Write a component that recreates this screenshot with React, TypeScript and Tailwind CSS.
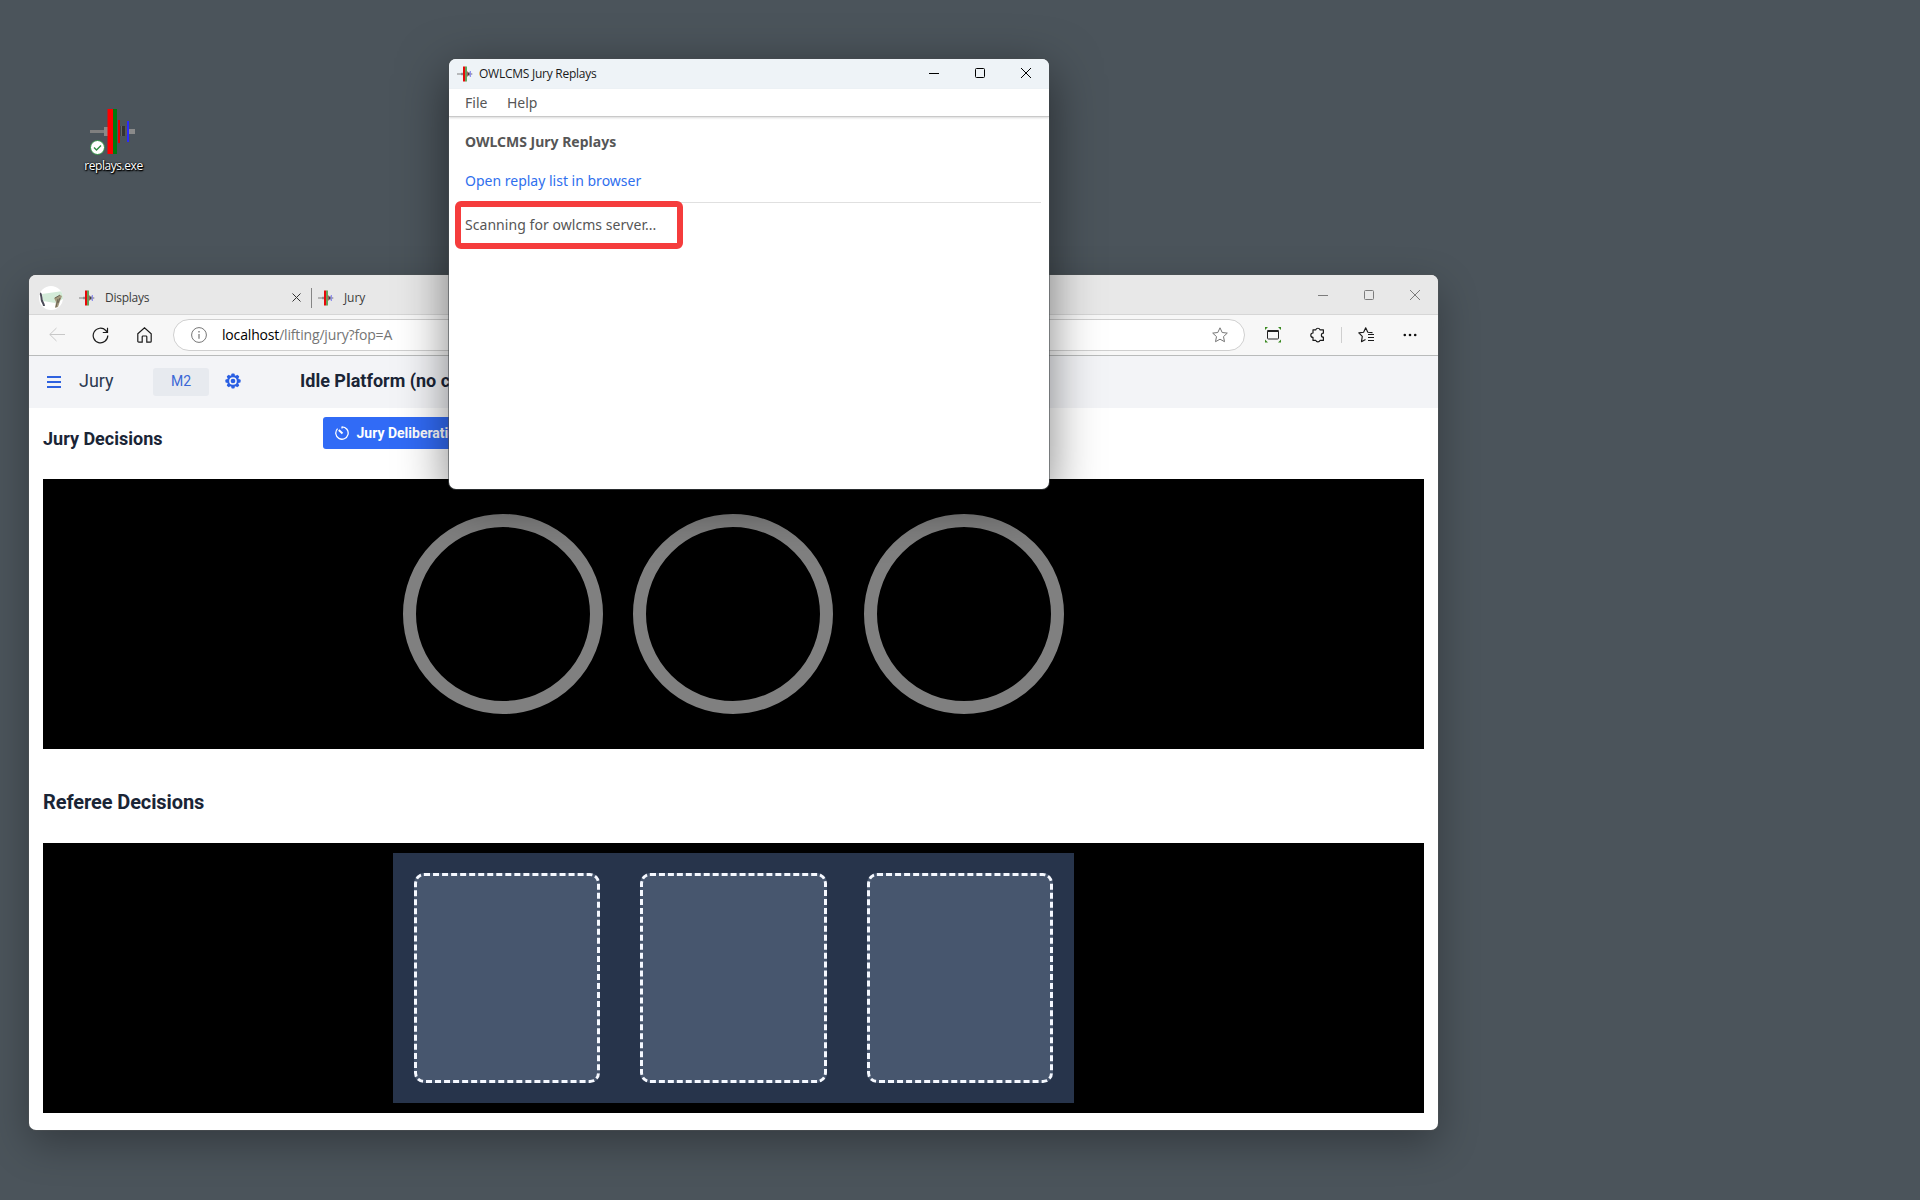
import React from "react";

const UI = "font-['Open_Sans','Noto_Sans',sans-serif]";

function Barbell({ className }: { className?: string }) {
  return (
    <svg viewBox="0 0 16 16" className={className}>
      <rect x="0" y="7.500" width="5" height="1" fill="#808080" />
      <rect x="4" y="6.800" width="2" height="2.400" fill="#909090" />
      <rect x="6" y="0.500" width="2.300" height="15" fill="#e80808" />
      <rect x="8.300" y="0.500" width="1.500" height="15" fill="#3a9a3a" />
      <rect x="9.800" y="5.500" width="1" height="5" fill="#b04040" />
      <rect x="10.800" y="6.500" width="1.800" height="3" fill="#404048" />
      <rect x="12.800" y="5" width="1" height="6" fill="#7a7aee" />
      <rect x="13.800" y="7.400" width="1.500" height="1.200" fill="#808090" />
    </svg>
  );
}

function DesktopIcon() {
  return (
    <div className="absolute left-[83px] top-[104px] flex w-[61px] flex-col items-center">
      <svg viewBox="0 0 62 54" className="h-[54px] w-[62px] shrink-0 self-start">
        <rect x="7" y="26" width="15" height="3" fill="#7f7f7f" />
        <rect x="21" y="23" width="4" height="9" fill="#8a8a8a" />
        <rect x="24.500" y="5" width="6" height="45" fill="#fe0000" />
        <rect x="30" y="5" width="4" height="45" fill="#007a10" />
        <rect x="35" y="16" width="2" height="23" fill="#e40000" />
        <rect x="37.500" y="22" width="4.500" height="10" fill="#333" />
        <rect x="38" y="22" width="1" height="10" fill="#666" />
        <rect x="42" y="23" width="2" height="8" fill="#555" />
        <rect x="44" y="17" width="2" height="21" fill="#2a2aff" />
        <rect x="46" y="25" width="6" height="5" fill="#8a8a8a" />
        <circle cx="14.500" cy="43.500" r="7" fill="#fff" stroke="#2f8f43" strokeWidth="1" />
        <path d="M11 43.500l2.500 2.500 4.500-4.500" fill="none" stroke="#2f8f43" strokeWidth="1.400" />
      </svg>
      <span className={`${UI} text-[12px] leading-4 tracking-[-0.45px] text-white [text-shadow:0_1px_2px_#000,0_0_2px_#000,1px_1px_1px_#000]`}>replays.exe</span>
    </div>
  );
}

function Controls({ color }: { color: string }) {
  return (
    <div className="flex items-center">
      <svg className="mr-[36px] size-[10px]" viewBox="0 0 10 10"><path d="M0 5.500h10" stroke={color} /></svg>
      <svg className="mr-9 size-[10px]" viewBox="0 0 10 10"><rect x=".5" y=".5" width="9" height="9" rx="1" fill="none" stroke={color} /></svg>
      <svg className="size-[10px]" viewBox="0 0 10 10"><path d="M0 0l10 10M10 0L0 10" fill="none" stroke={color} /></svg>
    </div>
  );
}

function Avatar() {
  return (
    <svg viewBox="0 0 24 24" className="size-6">
      <defs><clipPath id="av"><circle cx="12" cy="12" r="12" /></clipPath></defs>
      <g clipPath="url(#av)">
        <rect width="24" height="24" fill="#fff" />
        <path d="M3 8L24 5v8l-8 4L4 15z" fill="#d3ebd9" />
        <path d="M1 7c2 2 1 5 2 8 1 2 2 3 2 5" fill="none" stroke="#4b4b58" strokeWidth="2" />
        <path d="M15 12l6-3 2 1-2 5-2 6-3 1 1-6z" fill="#a39a7e" />
        <path d="M16 12l5-3M19 13l-2 8M21 12l-2 5" fill="none" stroke="#5c5649" strokeWidth=".8" />
      </g>
    </svg>
  );
}

function TabBar() {
  return (
    <div className="flex h-[40px] shrink-0 items-center border-b border-[#d6d6d6] bg-[#e8e8e8] pt-[6px]">
      <div className="ml-[10px] mt-px size-6"><Avatar /></div>
      <Barbell className="ml-4 size-4" />
      <span className="ml-[10px] w-[180px] pt-px text-[12px] tracking-[-0.25px] text-[#3c3c3c]">Displays</span>
      <svg className="ml-[7px] size-[9px]" viewBox="0 0 9 9"><path d="M.5.500l8 8M8.500.500l-8 8" stroke="#333" fill="none" /></svg>
      <div className="ml-[10px] h-5 w-px bg-[#858585]" />
      <Barbell className="ml-[6px] size-4" />
      <span className="ml-[10px] pt-px text-[12px] tracking-[-0.1px] text-[#3c3c3c]">Jury</span>
      <div className="-mt-[6px] ml-auto mr-[18px]"><Controls color="#7c7c7c" /></div>
    </div>
  );
}

function Toolbar() {
  return (
    <div className="flex h-[41px] shrink-0 items-center border-b border-[#b9bbbb] bg-[#f7f7f7]">
      <svg className="ml-5 h-4 w-4" viewBox="0 0 16 16" fill="none" stroke="#c8c8c8"><path d="M16 7.500H.8M7.500 1L.8 7.500 7.500 14" /></svg>
      <svg className="ml-[27px] h-[17px] w-[17px]" viewBox="0 0 17 17" fill="none" stroke="#1b1b1b" strokeWidth="1.200"><path d="M15.800 8.500A7.300 7.300 0 1 1 13.800 3.500L15.200 5.200M15.500.8v4.700H10.800" /></svg>
      <svg className="ml-[28px] h-[16px] w-[15px]" viewBox="0 0 15 16" fill="none" stroke="#1b1b1b" strokeWidth="1.200"><path d="M.8 6.800L7.500.8l6.700 6v7.400a1 1 0 0 1-1 1H9.800v-5.400a.8.8 0 0 0-.8-.8H6a.8.8 0 0 0-.8.8v5.400H1.800a1 1 0 0 1-1-1z" /></svg>
      <div className="ml-[21px] flex h-8 w-[1072px] items-center rounded-full border border-[#cfcfcf] bg-white">
        <svg className="ml-[17px] size-4" viewBox="0 0 16 16" fill="none" stroke="#767676"><circle cx="8" cy="8" r="7.400" /><path d="M8 7v4.800" strokeWidth="1.200" /><path d="M8 4v1.400" strokeWidth="1.300" /></svg>
        <span className="ml-[15px] pb-px text-[14px] tracking-[-0.17px] text-[#757575]"><span className="text-black">localhost</span>/lifting/jury?fop=A</span>
        <svg className="ml-auto mr-4 size-4" viewBox="0 0 16 16" fill="none" stroke="#767676" strokeLinejoin="round"><path d="M8 .8l2.200 4.700 5.100.6-3.800 3.500 1 5.100L8 12.200l-4.500 2.500 1-5.100L.7 6.100l5.100-.6z" /></svg>
      </div>
      <svg className="ml-5 size-4" viewBox="0 0 16 16" fill="none"><path d="M0 3L0 0H3L0 3ZM13 0h3v3L13 0ZM16 12.500v3h-3L16 12.500ZM3 15.500H0v-3L3 15.500Z" fill="#3a8a20" /><rect x="2.500" y="3.500" width="11" height="8.500" rx=".8" stroke="#222" /><path d="M2.500 4h11" stroke="#222" strokeWidth="1.800" /></svg>
      <svg className="ml-[29px] size-4" viewBox="0 0 16 16" fill="none" stroke="#1b1b1b" strokeWidth="1.200" strokeLinejoin="round"><path d="M3 2.800h2.800a2.200 2.200 0 0 1 4.200 0H13.400v3.400a2 2 0 0 0 0 4v3.200H10a2.200 2.200 0 0 1-4.200 0H3v-3a2.200 2.200 0 0 1 0-4.400z" /></svg>
      <div className="ml-[15px] h-4 w-px bg-[#cfcfcf]" />
      <svg className="ml-4 size-4" viewBox="0 0 16 16" fill="none" stroke="#1b1b1b" strokeWidth="1.150" strokeLinejoin="round"><path d="M14.500 5.600L9.800 5.200 7.700.8 5.600 5.200.8 5.900l3.500 3.500-.8 5.300 4-2.200M10 7.500h6M10 10.500h6M10 13.500h6" /></svg>
      <svg className="ml-[29px] h-[4px] w-[14px]" viewBox="0 0 14 4" fill="#111"><circle cx="1.800" cy="2" r="1.300" /><circle cx="7" cy="2" r="1.300" /><circle cx="12.200" cy="2" r="1.300" /></svg>
    </div>
  );
}

function AppHeader() {
  return (
    <div className="flex h-[52px] shrink-0 items-center bg-[#f3f4f7] pb-[3px] font-[Roboto,sans-serif]">
      <svg className="ml-[18px] mt-[2px] h-[12px] w-[14px]" viewBox="0 0 14 12"><path d="M0 1h14M0 6h14M0 11h14" stroke="#2f62df" strokeWidth="1.900" /></svg>
      <span className="ml-[18px] w-[74px] text-[18px] text-[#2b3950]">Jury</span>
      <div className="mt-[3px] flex h-7 w-14 items-center justify-center rounded-[3px] bg-[#e7eaef] pb-px text-[14px] text-[#3a67d6]">M2</div>
      <svg className="ml-[15.500px] mt-px size-4" viewBox="0 0 16 16">
        <g fill="#2a5fe3">
          <rect x="6.300" y=".4" width="3.400" height="15.200" rx="1" />
          <rect x="6.300" y=".4" width="3.400" height="15.200" rx="1" transform="rotate(45 8 8)" />
          <rect x="6.300" y=".4" width="3.400" height="15.200" rx="1" transform="rotate(90 8 8)" />
          <rect x="6.300" y=".4" width="3.400" height="15.200" rx="1" transform="rotate(135 8 8)" />
          <circle cx="8" cy="8" r="6" />
        </g>
        <circle cx="8" cy="8" r="3.100" fill="none" stroke="#f3f4f7" strokeWidth="1.500" />
      </svg>
      <span className="ml-[59.500px] whitespace-nowrap text-[18px] font-bold text-[#1a2536]">Idle Platform (no c</span>
    </div>
  );
}

function BrowserWindow() {
  return (
    <div className={`${UI} absolute left-[29px] top-[275px] flex h-[855px] w-[1409px] flex-col overflow-hidden rounded-[7px] bg-white`}>
      <TabBar />
      <Toolbar />
      <AppHeader />
      <div className="flex flex-col px-[14px] font-[Roboto,sans-serif]">
        <div className="flex h-[71px] items-start">
          <h2 className="w-[280px] pt-[17px] text-[18px] font-bold leading-7 text-[#1a2536]">Jury Decisions</h2>
          <button className="mt-[9px] flex h-8 w-[180px] items-center rounded-[3px] bg-[#316bf6] text-left text-[14px] font-bold text-white">
            <svg className="ml-3 size-[14px]" viewBox="0 0 14 14" fill="none" stroke="#fff" strokeWidth="1.300"><path d="M7 .4V2.400M7 .8A6.200 6.200 0 1 1 2.600 2.600" /><path d="M3.800 4L7.500 7.500" strokeWidth="2" /></svg>
            <span className="ml-[7.500px] whitespace-nowrap">Jury Deliberation</span>
          </button>
        </div>
        <div className="flex h-[270px] w-[1381px] items-center justify-center bg-black">
          <div className="mr-[30px] size-[200px] rounded-full border-[13px] border-[#808080]" />
          <div className="mr-[31px] size-[200px] rounded-full border-[13px] border-[#808080]" />
          <div className="size-[200px] rounded-full border-[13px] border-[#808080]" />
        </div>
        <h2 className="flex h-[94px] items-center pt-[12px] text-[20px] font-bold tracking-[-0.1px] text-[#1a2536]">Referee Decisions</h2>
        <div className="flex h-[270px] w-[1381px] items-center justify-center bg-black">
          <div className="flex h-[250px] w-[681px] items-center justify-between bg-[#27344b] px-[21px]">
            <div className="h-[210px] w-[186px] rounded-[10px] border-[3px] border-dashed border-[#f5f8ff] bg-[#47566e]" />
            <div className="h-[210px] w-[187px] rounded-[10px] border-[3px] border-dashed border-[#f5f8ff] bg-[#47566e]" />
            <div className="h-[210px] w-[186px] rounded-[10px] border-[3px] border-dashed border-[#f5f8ff] bg-[#47566e]" />
          </div>
        </div>
      </div>
    </div>
  );
}

function ReplayWindow() {
  return (
    <div className="absolute left-[449px] top-[59px] flex h-[430px] w-[600px] flex-col rounded-[7px] bg-white font-['Noto_Sans',sans-serif] text-[14px] text-[#565656] shadow-[0_0_0_1px_rgba(70,75,78,0.6),0_14px_50px_rgba(0,0,0,0.5)]">
      <div className={`${UI} flex h-[30px] shrink-0 items-center rounded-t-[7px] bg-[#eef3f7]`}>
        <Barbell className="ml-2 size-4" />
        <span className="ml-[6px] text-[12px] tracking-[-0.25px] text-[#1a1a1a]">OWLCMS Jury Replays</span>
        <div className="-mt-[2px] ml-auto mr-[18px]"><Controls color="#000" /></div>
      </div>
      <div className="flex h-[28px] shrink-0 items-center gap-[19.500px] border-b border-[#c9c9c9] pl-4 shadow-[0_1px_2px_rgba(0,0,0,0.15)]">
        <span>File</span>
        <span>Help</span>
      </div>
      <div className="ml-4 mr-2 flex flex-col">
        <h1 className="mt-[14px] h-[22px] font-bold leading-[22px]">OWLCMS Jury Replays</h1>
        <a className="mt-[17px] h-[22px] leading-[22px] text-[#2f6fee]">Open replay list in browser</a>
        <div className="-ml-2 mt-[10px] h-px bg-[#e0e0e0]" />
        <div className="-ml-[10px] -mt-[2px] flex h-12 w-[228px] items-center rounded-[6px] border-[6px] border-[#f53c3c] bg-white pb-[2px] pl-1 tracking-[0.05px]">Scanning for owlcms server...</div>
      </div>
    </div>
  );
}

export default function App() {
  return (
    <div className="relative h-[1200px] w-[1920px] overflow-hidden bg-[#4b545b]">
      <DesktopIcon />
      <div className="absolute left-[29px] top-[275px] h-[855px] w-[1409px] rounded-[7px] shadow-[0_0_0_1px_rgba(80,84,86,0.5),0_14px_40px_rgba(0,0,0,0.3)]" />
      <BrowserWindow />
      <ReplayWindow />
    </div>
  );
}
